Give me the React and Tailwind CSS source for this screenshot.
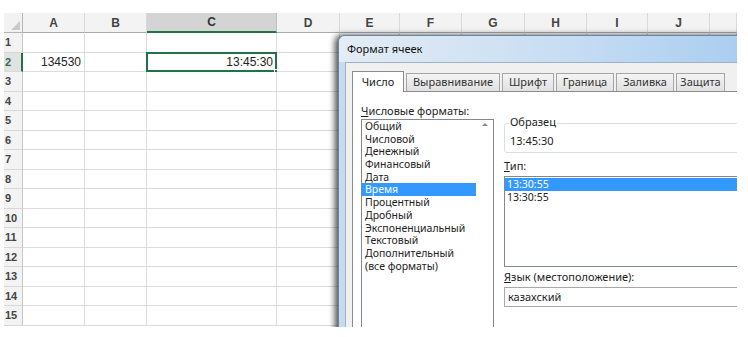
import React from "react";

const letters = ["", "A", "B", "C", "D", "E", "F", "G", "H", "I", "J", ""];
const gridCols =
  "grid grid-cols-[19px_62px_62px_130px_63px_60px_62px_63px_62px_61px_62px_27px]";

const formats = [
  "Общий",
  "Числовой",
  "Денежный",
  "Финансовый",
  "Дата",
  "Время",
  "Процентный",
  "Дробный",
  "Экспоненциальный",
  "Текстовый",
  "Дополнительный",
  "(все форматы)",
];

const tabs = [
  { t: "Число", w: "w-[52px]", sel: true },
  { t: "Выравнивание", w: "w-[94px]" },
  { t: "Шрифт", w: "w-[52px]" },
  { t: "Граница", w: "w-[58px]" },
  { t: "Заливка", w: "w-[58px]" },
  { t: "Защита", w: "w-[49px]" },
];

function HeaderRow() {
  return (
    <div className={gridCols + " h-[20px]"}>
      {letters.map((l, i) => {
        if (i === 0)
          return (
            <div
              key={i}
              className="relative bg-[#f2f2f2] border-r border-b border-[#b5b5b5]"
            >
              <div className="absolute right-[2px] bottom-[2px] w-0 h-0 border-l-[9px] border-l-transparent border-b-[9px] border-b-[#c9c9c9]" />
            </div>
          );
        const sel = l === "C";
        return (
          <div
            key={i}
            className={
              "flex items-center justify-center text-[12px] font-bold " +
              (sel
                ? "bg-[#d4d4d4] border-b-2 border-b-[#217346] border-r border-r-[#c0c0c0] text-[#333]"
                : "bg-[#f3f3f3] border-b border-b-[#ababab] border-r border-r-[#d9d9d9] text-[#444]")
            }
          >
            {l}
          </div>
        );
      })}
    </div>
  );
}

function BodyRow({ n }) {
  return (
    <div className={gridCols + " h-[19.5px]"}>
      {letters.map((l, i) => {
        if (i === 0)
          return (
            <div
              key={i}
              className={
                "flex items-center pl-[1px] text-[11px] font-bold border-b border-b-[#d8d8d8] " +
                (n === 2
                  ? "bg-[#e2e2e2] border-r-2 border-r-[#217346] text-[#217346]"
                  : "bg-[#f3f3f3] border-r border-r-[#c6c6c6] text-[#444]")
              }
            >
              {n}
            </div>
          );
        let content = null;
        if (n === 2 && l === "A") content = "134530";
        if (n === 2 && l === "C") content = "13:45:30";
        const isSel = n === 2 && l === "C";
        return (
          <div
            key={i}
            className="relative flex items-center justify-end pr-[3px] text-[12px] text-[#222] bg-white border-r border-b border-[#dcdcdc]"
          >
            {content}
            {isSel && (
              <>
                <div className="absolute left-[-1px] top-[-1px] right-[-1px] bottom-[-1px] border-2 border-[#217346]" />
                <div className="absolute right-[-3px] bottom-[-3px] w-[5px] h-[5px] bg-[#217346] border border-white" />
              </>
            )}
          </div>
        );
      })}
    </div>
  );
}

function U({ children }) {
  return <span className="underline underline-offset-[1px]">{children}</span>;
}

function Dialog() {
  return (
    <div className="absolute left-[334px] top-[22px] w-[430px] h-[320px] rounded-tl-[7px] border border-[#6a84a2] bg-[#c7daee] shadow-[-3px_0_6px_rgba(0,0,0,0.7)] overflow-hidden">
      <div className="h-[26px] flex items-center pl-[8px] text-[11px] text-[#111] bg-gradient-to-r from-[#e4ecf5] via-[#c9def3] to-[#a6cbef]">
        Формат ячеек
      </div>
      <div className="ml-[6px] h-full bg-[#f0f0f0] border border-[#9fb1c4] pt-[7px] pl-[6px]">
        <div className="flex items-end gap-[2px] h-[21px]">
          {tabs.map((t) =>
            t.sel ? (
              <div
                key={t.t}
                className={
                  t.w +
                  " h-[21px] -mb-[1px] relative z-10 bg-white border border-b-0 border-[#898c95] flex items-center justify-center text-[11px] text-[#222]"
                }
              >
                {t.t}
              </div>
            ) : (
              <div
                key={t.t}
                className={
                  t.w +
                  " h-[18px] bg-gradient-to-b from-[#f4f4f4] to-[#e1e1e1] border border-b-0 border-[#a5a5a5] flex items-center justify-center text-[11px] text-[#333]"
                }
              >
                {t.t}
              </div>
            )
          )}
        </div>
        <div className="h-full bg-white border-l border-t border-[#898c95] pl-[8px] pt-[12px] flex gap-[10px]">
          <div className="flex flex-col">
            <div className="h-[13px] leading-[13px] text-[11px] text-[#222]">
              <U>Ч</U>исловые форматы:
            </div>
            <div className="mt-[2px] w-[133px] h-[240px] border border-[#828790] flex bg-white">
              <div className="w-[114px] flex flex-col">
                {formats.map((f) => (
                  <div
                    key={f}
                    className={
                      "h-[12.7px] leading-[12.7px] pl-[3px] text-[10.5px] whitespace-nowrap " +
                      (f === "Время"
                        ? "bg-[#3399ff] text-white"
                        : "text-[#222]")
                    }
                  >
                    {f}
                  </div>
                ))}
              </div>
              <div className="w-[17px] flex justify-center pt-[3px]">
                <div className="w-0 h-0 border-l-[3px] border-l-transparent border-r-[3px] border-r-transparent border-b-[3px] border-b-[#8a8a8a]" />
              </div>
            </div>
          </div>
          <div className="flex flex-col w-[260px]">
            <div className="relative mt-[19px] h-[30px] border border-[#d5dfe5] rounded-[3px]">
              <div className="absolute left-[4px] top-[-9px] bg-white px-[1px] text-[11px] leading-[13px] text-[#222]">
                Образец
              </div>
              <div className="pt-[10px] pl-[5px] text-[11px] leading-[13px] text-[#222]">
                13:45:30
              </div>
            </div>
            <div className="mt-[6px] h-[13px] leading-[13px] text-[11px] text-[#222]">
              <U>Т</U>ип:
            </div>
            <div className="mt-[4px] h-[91px] border border-[#828790] pt-[1px] bg-white">
              <div className="h-[13px] leading-[13px] pl-[2px] text-[10.5px] bg-[#3399ff] text-white">
                13:30:55
              </div>
              <div className="h-[13px] leading-[13px] pl-[2px] text-[10.5px] text-[#222]">
                13:30:55
              </div>
            </div>
            <div className="mt-[3px] h-[13px] leading-[13px] text-[11px] text-[#222]">
              <U>Я</U>зык (местоположение):
            </div>
            <div className="mt-[4px] h-[20px] border border-[#a8a8a8] flex items-center pl-[3px] text-[11px] text-[#222] bg-white">
              казахский
            </div>
          </div>
        </div>
      </div>
    </div>
  );
}

export default function App() {
  return (
    <div
      className="w-[748px] h-[337px] bg-white overflow-hidden pt-[13px] pl-[4px]"
      style={{ fontFamily: '"Noto Sans", "Open Sans", sans-serif' }}
    >
      <div className="relative w-[733px] h-[314px] overflow-hidden [font-family:'Liberation_Sans',Arial,sans-serif]">
        <HeaderRow />
        {Array.from({ length: 15 }, (_, i) => (
          <BodyRow key={i} n={i + 1} />
        ))}
        <div className="[font-family:'Noto_Sans','Open_Sans',sans-serif]">
          <Dialog />
        </div>
      </div>
    </div>
  );
}
